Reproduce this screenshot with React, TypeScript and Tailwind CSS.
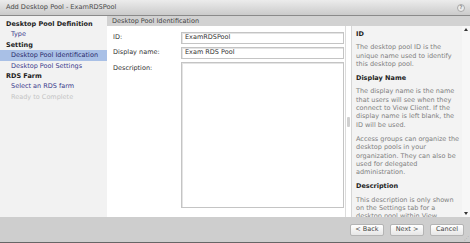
import React from "react";

const navItems = [
  { label: "Desktop Pool Definition", kind: "group" },
  { label: "Type", kind: "link" },
  { label: "Setting", kind: "group" },
  { label: "Desktop Pool Identification", kind: "active" },
  { label: "Desktop Pool Settings", kind: "link" },
  { label: "RDS Farm", kind: "group" },
  { label: "Select an RDS farm", kind: "link" },
  { label: "Ready to Complete", kind: "disabled" },
];

const help = [
  { title: "ID", body: ["The desktop pool ID is the unique name used to identify this desktop pool."] },
  {
    title: "Display Name",
    body: [
      "The display name is the name that users will see when they connect to View Client. If the display name is left blank, the ID will be used.",
      "Access groups can organize the desktop pools in your organization. They can also be used for delegated administration.",
    ],
  },
  { title: "Description", body: ["This description is only shown on the Settings tab for a desktop pool within View Administrator."] },
];

function NavRow({ label, kind }: { label: string; kind: string }) {
  if (kind === "group")
    return <div className="h-[10.4px] pl-[6px] font-bold leading-[10.4px] text-[#222]">{label}</div>;
  if (kind === "active")
    return <div className="h-[10.4px] bg-[#a9c0e6] pl-[11px] leading-[10.4px] text-[#2a2a6a]">{label}</div>;
  if (kind === "disabled")
    return <div className="h-[10.4px] pl-[11px] leading-[10.4px] text-[#c4c4c4]">{label}</div>;
  return <div className="h-[10.4px] pl-[11px] leading-[10.4px] text-[#3a3a8c]">{label}</div>;
}

function Btn({ children }: { children: React.ReactNode }) {
  return (
    <button className="flex h-[12px] w-[34px] items-center justify-center overflow-hidden whitespace-nowrap rounded-[2px] border border-[#b4b4b4] bg-gradient-to-b from-[#ffffff] to-[#e6e6e6] px-0 text-[6.5px] leading-none text-[#444]">
      {children}
    </button>
  );
}

export default function App() {
  return (
    <div className="flex h-[243px] w-[470px] flex-col overflow-hidden bg-white font-['DejaVu_Sans',sans-serif] text-[6.5px] text-[#333]">
      {/* Title */}
      <div className="flex h-[16px] shrink-0 items-center justify-between border-b border-[#8a8a8a] bg-gradient-to-b from-[#ececec] to-[#cbcbcb] pl-[6px] pr-[5px]">
        <span className="text-[6.6px] text-[#4a4a4a]">Add Desktop Pool - ExamRDSPool</span>
        <span className="flex h-[8px] w-[8px] items-center justify-center rounded-full border border-[#a8a8a8] bg-[#ececec] text-[5px] font-bold leading-none text-[#8a8a8a]">
          ?
        </span>
      </div>

      <div className="flex h-[201px] shrink-0">
        {/* Nav */}
        <div className="w-[107px] shrink-0 bg-[#f2f2f2] pt-[3px]">
          {navItems.map((n) => (
            <NavRow key={n.label} label={n.label} kind={n.kind} />
          ))}
        </div>

        <div className="flex min-w-0 flex-1 flex-col">
          <div className="h-[10px] shrink-0 bg-[#d2d2d2] pl-[5px] leading-[10px] text-[#444]">
            Desktop Pool Identification
          </div>
          <div className="flex min-h-0 flex-1">
            {/* Form */}
            <div className="w-[238px] shrink-0 pl-[6px] pr-[1px] pt-[6px]">
              <div className="flex h-[12px] items-center">
                <span className="w-[68px]">ID:</span>
                <div className="flex h-[12px] flex-1 items-center border border-[#c4c4c4] bg-white pl-[3px] shadow-[inset_1px_1px_0_#e4e4e4]">
                  ExamRDSPool
                </div>
              </div>
              <div className="mt-[3px] flex h-[12px] items-center">
                <span className="w-[68px]">Display name:</span>
                <div className="flex h-[12px] flex-1 items-center border border-[#c4c4c4] bg-white pl-[3px] shadow-[inset_1px_1px_0_#e4e4e4]">
                  Exam RDS Pool
                </div>
              </div>
              <div className="mt-[3px] flex">
                <span className="w-[68px] pt-[2px]">Description:</span>
                <div className="h-[146px] flex-1 border border-[#c4c4c4] bg-white shadow-[inset_1px_1px_0_#e4e4e4]" />
              </div>
            </div>

            {/* Splitter */}
            <div className="flex w-[6px] shrink-0 items-center border-l border-[#dcdcdc]">
              <div className="ml-[1px] h-[10px] w-[3px] rounded-[1px] bg-[#cfcfcf]" />
            </div>

            {/* Help */}
            <div className="flex min-w-0 flex-1 border-l border-[#d6d6d6] bg-[#f3f3f3]">
              <div className="min-w-0 flex-1 overflow-hidden pl-[4px] pt-[4px] leading-[8.3px] text-[#808080]">
                {help.map((h) => (
                  <div key={h.title} className="mb-[5px]">
                    <div className="mb-[5px] font-bold text-[#222]">{h.title}</div>
                    {h.body.map((p, i) => (
                      <p key={i} className="mb-[6px]">
                        {p}
                      </p>
                    ))}
                  </div>
                ))}
              </div>
              <div className="flex w-[8px] shrink-0 flex-col justify-between bg-[#f7f7f7] py-[2px]">
                <div className="mx-auto h-0 w-0 border-x-[2px] border-b-[3px] border-x-transparent border-b-[#333]" />
                <div className="mx-auto h-0 w-0 border-x-[2px] border-t-[3px] border-x-transparent border-t-[#333]" />
              </div>
            </div>
          </div>
        </div>
      </div>

      {/* Buttons */}
      <div className="relative flex h-[26px] shrink-0 items-center justify-end gap-[6px] border-b border-[#666] bg-[#cecece] pr-[6px]">
        <Btn>&lt; Back</Btn>
        <Btn>Next &gt;</Btn>
        <Btn>Cancel</Btn>
        <div className="absolute bottom-[1px] right-[1px] text-[5px] leading-none text-[#888]">⋰</div>
      </div>
    </div>
  );
}
